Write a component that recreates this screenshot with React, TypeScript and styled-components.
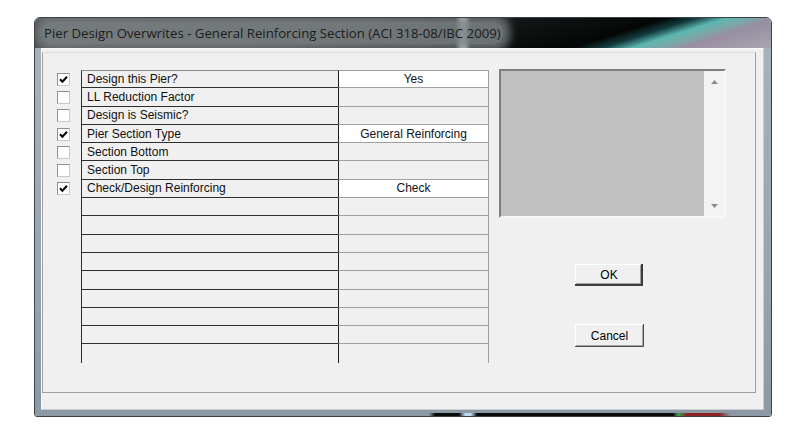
import styled, { createGlobalStyle } from "styled-components";

type PierRow = {
  label?: string;
  value?: string;
  checked?: boolean;
};

const GlobalStyle = createGlobalStyle`
  html, body {
    margin: 0;
    padding: 0;
    background: #ffffff;
  }
`;

const Page = styled.div`
  width: 795px;
  height: 438px;
  padding: 17px 0 0 34px;
  box-sizing: border-box;
`;

const Window = styled.div`
  width: 738px;
  height: 400px;
  box-sizing: border-box;
  border: 1px solid #3c4247;
  border-radius: 6px 6px 3px 3px;
  overflow: hidden;
  display: flex;
  flex-direction: column;
`;

const TitleBar = styled.div`
  height: 30px;
  flex: none;
  display: flex;
  align-items: center;
  padding-left: 7px;
  background:
    linear-gradient(90deg, transparent 420px, rgba(225, 238, 255, 0.85) 426px, rgba(225, 238, 255, 0.85) 430px, transparent 436px),
    linear-gradient(162.5deg, #4a4e51 0px, #3a3d40 100px, #121415 150px, #050707 190px, #123c3e 199px, #5cb6b0 208px, #78aaa9 215px, #978fa0 223px, #aaa3b0 250px);
`;

const TitleText = styled.span`
  font-family: "Open Sans", "Noto Sans", sans-serif;
  font-size: 13.2px;
  color: #1c1c1c;
  white-space: nowrap;
  padding: 2px 2px;
  border-radius: 8px;
  background: rgba(125, 130, 133, 0.85);
  box-shadow: 0 0 8px 7px rgba(125, 130, 133, 0.8);
`;

const FrameBody = styled.div`
  flex: 1;
  display: flex;
  padding: 0 7px 6px 6px;
  background:
    linear-gradient(90deg, transparent 394px, #0a0a0a 400px, #0a0a0a 424px, #b9d6f2 430px, #b9d6f2 436px, #0a0a0a 442px, #0a0a0a 638px, #3f9e52 643px, #8c2222 652px, #8c2222 684px, transparent 696px) bottom / 100% 3px no-repeat,
    linear-gradient(180deg, #a7b1b9 0%, #98a4ae 60%, #8c99a4 100%);
`;

const Client = styled.div`
  flex: 1;
  display: flex;
  flex-direction: column;
  background: #f0f0f0;
  border: 1px solid #fafafa;
  border-right-color: #c8cdd1;
  border-bottom-color: #c8cdd1;
`;

const Panel = styled.div`
  height: 341px;
  box-sizing: border-box;
  margin: 3px 7px 0 0;
  border: 1px solid #a0a0a0;
  border-top-color: #dcdcdc;
  display: flex;
  align-items: flex-start;
  padding-top: 17px;
`;

const Grid = styled.div`
  display: flex;
  flex-direction: column;
  width: 446px;
`;

const Row = styled.div`
  display: grid;
  grid-template-columns: 38px 257px 151px;
  height: 18.3px;
`;

const CheckCell = styled.div`
  display: flex;
  align-items: center;
  padding-left: 14px;
`;

const CheckBox = styled.span`
  width: 13px;
  height: 13px;
  box-sizing: border-box;
  background: #ffffff;
  border: 1px solid #8e8e8e;
  border-right-color: #c9c9c9;
  border-bottom-color: #c9c9c9;
  display: flex;
  align-items: center;
  justify-content: center;
`;

const LabelCell = styled.div<{ $first: boolean; $last: boolean }>`
  box-sizing: border-box;
  border-left: 1px solid #2e2e2e;
  border-top: ${(p) => (p.$first ? "1px solid #8a8a8a" : "none")};
  border-bottom: ${(p) => (p.$last ? "none" : "1px solid #2e2e2e")};
  background: #f0f0f0;
  font-family: "Liberation Sans", Arial, sans-serif;
  font-size: 12px;
  color: #111;
  padding-left: 5px;
  display: flex;
  align-items: center;
  white-space: nowrap;
`;

const ValueCell = styled.div<{ $first: boolean; $last: boolean; $filled: boolean }>`
  box-sizing: border-box;
  border-left: 1px solid #1e1e1e;
  border-right: 1px solid #a0a0a0;
  border-top: ${(p) => (p.$first ? "1px solid #a0a0a0" : "none")};
  border-bottom: ${(p) => (p.$last ? "none" : "1px solid #a0a0a0")};
  background: ${(p) => (p.$filled ? "#ffffff" : "#f0f0f0")};
  font-family: "Liberation Sans", Arial, sans-serif;
  font-size: 12px;
  color: #111;
  display: flex;
  align-items: center;
  justify-content: center;
  white-space: nowrap;
`;

const SideColumn = styled.div`
  margin-left: 10px;
  display: flex;
  flex-direction: column;
  margin-top: -1px;
`;

const Preview = styled.div`
  width: 227px;
  height: 149px;
  box-sizing: border-box;
  border: 2px solid #f8f8f8;
  border-top-color: #7e7e7e;
  border-left-color: #7e7e7e;
  display: flex;
`;

const PreviewArea = styled.div`
  flex: 1;
  background: #c0c0c0;
`;

const ScrollTrack = styled.div`
  width: 20px;
  background: #f3f3f3;
  display: flex;
  flex-direction: column;
  justify-content: space-between;
  align-items: center;
  padding: 9px 0 8px;
`;

const Button = styled.button<{ $default?: boolean }>`
  width: ${(p) => (p.$default ? "68px" : "69px")};
  height: ${(p) => (p.$default ? "22px" : "23px")};
  margin-left: 76px;
  padding: 0;
  border: none;
  background: #f0f0f0;
  font-family: "Liberation Sans", Arial, sans-serif;
  font-size: 12px;
  color: #000;
  box-shadow: ${(p) =>
    p.$default
      ? "inset -2px -2px #3c3c3c, inset 1px 1px #ffffff, inset 0 0 0 1px #6a6a6a, inset -3px -3px #a0a0a0"
      : "inset -1px -1px #4a4a4a, inset 1px 1px #ffffff, inset -2px -2px #a8a8a8"};
`;

const OkButton = styled(Button)`
  margin-top: 46px;
`;

const CancelButton = styled(Button)`
  margin-top: 38px;
`;

const Arrow = ({ up }: { up?: boolean }) => (
  <svg width="7" height="4" viewBox="0 0 7 4">
    <path d={up ? "M0 4 L3.5 0 L7 4 Z" : "M0 0 L3.5 4 L7 0 Z"} fill="#8c8c8c" />
  </svg>
);

const Tick = () => (
  <svg width="9" height="9" viewBox="0 0 9 9">
    <path d="M1 4.3 L3.4 6.7 L8 1.8" fill="none" stroke="#000" strokeWidth="2" />
  </svg>
);

const labelled: PierRow[] = [
  { label: "Design this Pier?", value: "Yes", checked: true },
  { label: "LL Reduction Factor", checked: false },
  { label: "Design is Seismic?", checked: false },
  { label: "Pier Section Type", value: "General Reinforcing", checked: true },
  { label: "Section Bottom", checked: false },
  { label: "Section Top", checked: false },
  { label: "Check/Design Reinforcing", value: "Check", checked: true },
];

const rows: PierRow[] = [...labelled, ...Array.from({ length: 9 }, () => ({}))];

export default function App() {
  return (
    <Page>
      <GlobalStyle />
      <Window>
        <TitleBar>
          <TitleText>Pier Design Overwrites - General Reinforcing Section (ACI 318-08/IBC 2009)</TitleText>
        </TitleBar>
        <FrameBody>
          <Client>
            <Panel>
              <Grid>
                {rows.map((row, i) => (
                  <Row key={i}>
                    <CheckCell>
                      {row.label !== undefined && <CheckBox>{row.checked && <Tick />}</CheckBox>}
                    </CheckCell>
                    <LabelCell $first={i === 0} $last={i === rows.length - 1}>
                      {row.label}
                    </LabelCell>
                    <ValueCell $first={i === 0} $last={i === rows.length - 1} $filled={!!row.value}>
                      {row.value}
                    </ValueCell>
                  </Row>
                ))}
              </Grid>
              <SideColumn>
                <Preview>
                  <PreviewArea />
                  <ScrollTrack>
                    <Arrow up />
                    <Arrow />
                  </ScrollTrack>
                </Preview>
                <OkButton $default>OK</OkButton>
                <CancelButton>Cancel</CancelButton>
              </SideColumn>
            </Panel>
          </Client>
        </FrameBody>
      </Window>
    </Page>
  );
}
